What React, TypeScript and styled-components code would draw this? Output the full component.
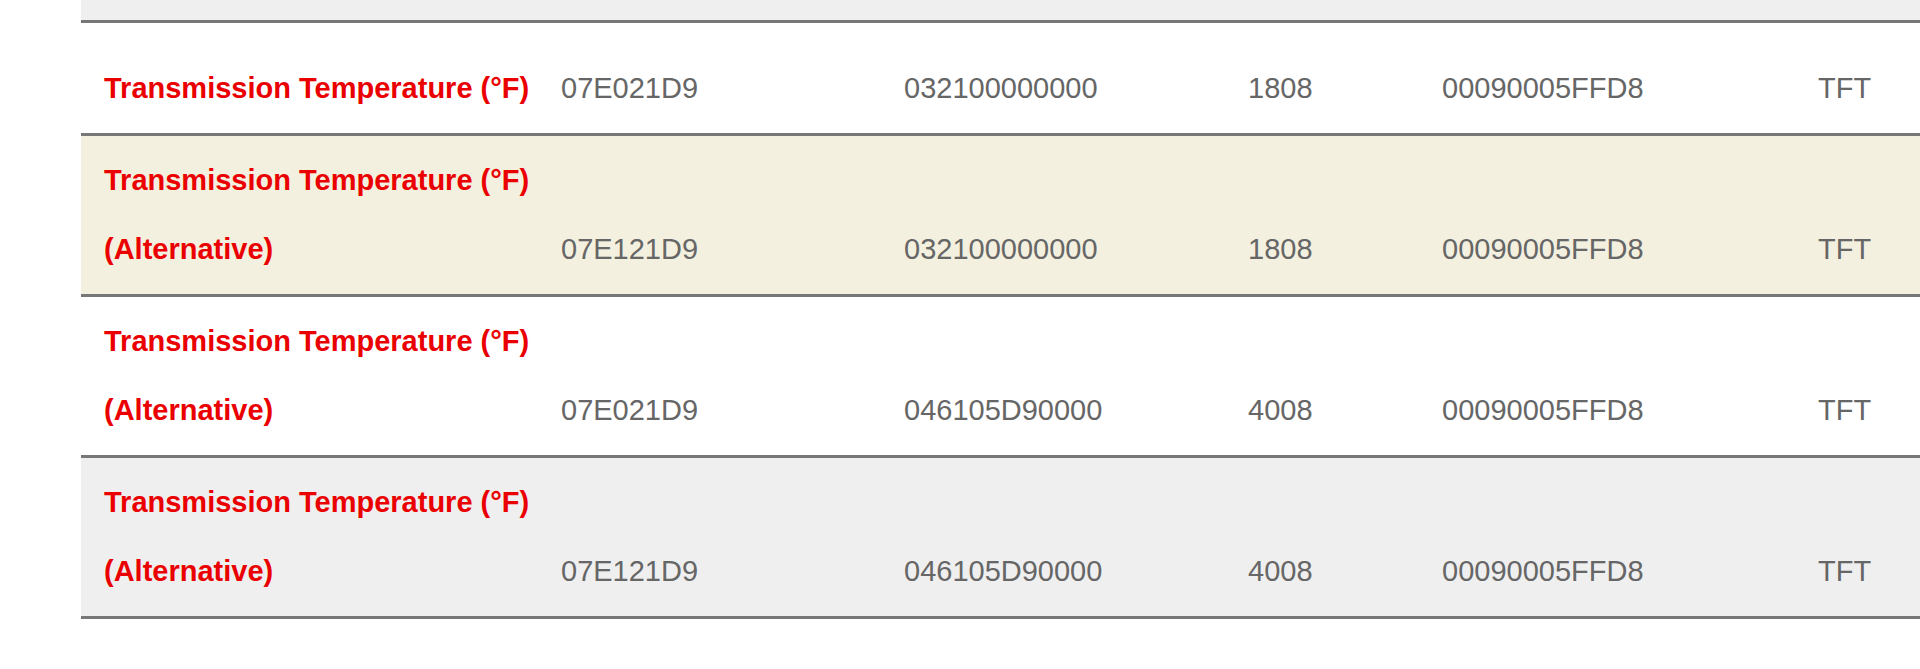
import styled, { createGlobalStyle } from 'styled-components';

const GlobalStyle = createGlobalStyle`
  html, body {
    margin: 0;
    padding: 0;
    background: #ffffff;
    font-family: "Liberation Sans", Arial, Helvetica, sans-serif;
  }
`;

const Page = styled.div`
  padding-left: 81px;
  overflow: hidden;
`;

const Table = styled.div`
  display: flex;
  flex-direction: column;
`;

type Tone = 'white' | 'beige' | 'grey';

const toneColors: Record<Tone, string> = {
  white: '#ffffff',
  beige: '#f4f0df',
  grey: '#efefef',
};

const Row = styled.div<{ $tone: Tone; $stub?: boolean }>`
  display: grid;
  grid-template-columns: 457px 343px 344px 194px 376px 1fr;
  align-items: end;
  min-height: ${({ $stub }) => ($stub ? '20px' : '110px')};
  background: ${({ $tone }) => toneColors[$tone]};
  border-bottom: 3px solid #777777;
`;

const Cell = styled.div`
  padding: 10px 0 10px 23px;
  font-size: 29px;
  line-height: 69px;
  color: #666666;
  white-space: nowrap;
`;

const LabelCell = styled(Cell)`
  color: #ea0000;
  font-weight: 700;
`;

const Note = styled.span`
  display: block;
`;

type Entry = {
  id: string;
  alt: boolean;
  header: string;
  data: string;
  bytes: string;
  formula: string;
  unit: string;
  tone: Tone;
};

const ROWS: Entry[] = [
  { id: 'r1', alt: false, header: '07E021D9', data: '032100000000', bytes: '1808', formula: '00090005FFD8', unit: 'TFT', tone: 'white' },
  { id: 'r2', alt: true, header: '07E121D9', data: '032100000000', bytes: '1808', formula: '00090005FFD8', unit: 'TFT', tone: 'beige' },
  { id: 'r3', alt: true, header: '07E021D9', data: '046105D90000', bytes: '4008', formula: '00090005FFD8', unit: 'TFT', tone: 'white' },
  { id: 'r4', alt: true, header: '07E121D9', data: '046105D90000', bytes: '4008', formula: '00090005FFD8', unit: 'TFT', tone: 'grey' },
];

export default function App() {
  return (
    <>
      <GlobalStyle />
      <Page>
        <Table>
          <Row $tone="grey" $stub />
          {ROWS.map((row) => (
            <Row key={row.id} $tone={row.tone}>
              <LabelCell>
                Transmission Temperature (°F)
                {row.alt && <Note>(Alternative)</Note>}
              </LabelCell>
              <Cell>{row.header}</Cell>
              <Cell>{row.data}</Cell>
              <Cell>{row.bytes}</Cell>
              <Cell>{row.formula}</Cell>
              <Cell>{row.unit}</Cell>
            </Row>
          ))}
        </Table>
      </Page>
    </>
  );
}
